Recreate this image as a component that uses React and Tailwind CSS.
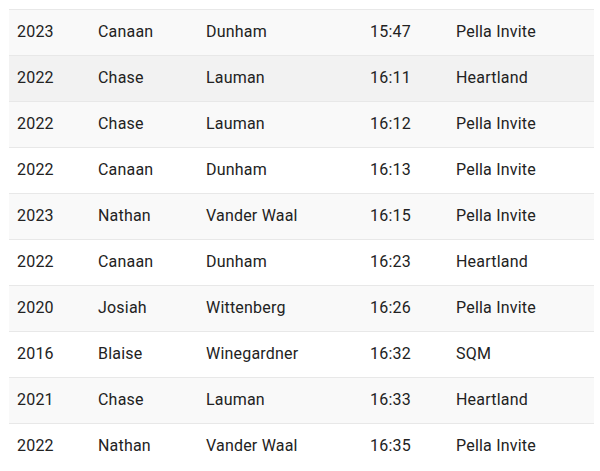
import React from "react";

const rows = [
  ["2023", "Canaan", "Dunham", "15:47", "Pella Invite"],
  ["2022", "Chase", "Lauman", "16:11", "Heartland"],
  ["2022", "Chase", "Lauman", "16:12", "Pella Invite"],
  ["2022", "Canaan", "Dunham", "16:13", "Pella Invite"],
  ["2023", "Nathan", "Vander Waal", "16:15", "Pella Invite"],
  ["2022", "Canaan", "Dunham", "16:23", "Heartland"],
  ["2020", "Josiah", "Wittenberg", "16:26", "Pella Invite"],
  ["2016", "Blaise", "Winegardner", "16:32", "SQM"],
  ["2021", "Chase", "Lauman", "16:33", "Heartland"],
  ["2022", "Nathan", "Vander Waal", "16:35", "Pella Invite"],
];

const App = () => {
  return (
    <div className="w-[600px] h-[471px] bg-white pt-[9px] pl-[9px] overflow-hidden font-['Roboto',sans-serif] text-[16px] text-[#222222] tracking-[0.2px]">
      <div className="w-[585px]">
        {rows.map((r, idx) => {
          // second row shows the hover shade, odd rows are striped
          const bg =
            idx === 1 ? "bg-[#f2f2f2]" : idx % 2 === 0 ? "bg-[#f9f9f9]" : "bg-white";
          return (
            <div
              key={idx}
              className={`grid grid-cols-[81px_108px_164px_86px_1fr] h-[46px] border-t border-[#e8e8e8] items-center pb-[2px] ${bg}`}
            >
              {r.map((cell, i) => (
                <div key={i} className="px-2 whitespace-nowrap">
                  {cell}
                </div>
              ))}
            </div>
          );
        })}
      </div>
    </div>
  );
};

export default App;
